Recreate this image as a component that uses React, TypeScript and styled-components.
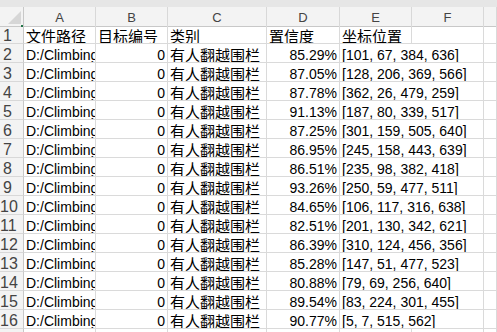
import React from 'react';
import styled, { createGlobalStyle } from 'styled-components';

const GlobalStyle = createGlobalStyle`
  html, body {
    margin: 0;
    padding: 0;
    background: #ffffff;
    overflow: hidden;
  }
  body {
    font-family: "Liberation Sans", "Noto Sans CJK SC", sans-serif;
  }
`;

const COLS = '24px 72px 72px 99px 73px 72px 72px 1fr';

const Sheet = styled.div`
  width: 497px;
  height: 332px;
  overflow: hidden;
  background: #ffffff;
`;

const TopBand = styled.div`
  height: 7px;
  background: #e6e6e6;
`;

const Row = styled.div<{ head?: boolean }>`
  display: grid;
  grid-template-columns: ${COLS};
  height: ${({ head }) => (head ? '18px' : '19px')};
`;

const Corner = styled.div`
  position: relative;
  background: #f3f3f3;
  border-right: 1px solid #c8c8c8;
  border-bottom: 1px solid #c8c8c8;
  box-sizing: border-box;
`;

const Triangle = styled.div`
  position: absolute;
  right: 2px;
  bottom: 2px;
  width: 0;
  height: 0;
  border-left: 13px solid transparent;
  border-bottom: 13px solid #d6d6d6;
`;

const GreenDot = styled.div`
  position: absolute;
  right: 0px;
  bottom: -1px;
  width: 2px;
  height: 2px;
  background: #217346;
`;

const ColHead = styled.div`
  background: #f3f3f3;
  border-right: 1px solid #d8d8d8;
  border-bottom: 1px solid #c8c8c8;
  box-sizing: border-box;
  color: #444444;
  font-size: 13px;
  line-height: 17px;
  padding-top: 2px;
  text-align: center;
`;

const RowHead = styled.div`
  background: #f3f3f3;
  border-right: 1px solid #c8c8c8;
  border-bottom: 1px solid #d8d8d8;
  box-sizing: border-box;
  color: #444444;
  font-family: "Liberation Sans Narrow", "Liberation Sans", sans-serif;
  font-size: 16px;
  line-height: 19px;
  padding-top: 1px;
  padding-right: 8px;
  text-align: center;
  overflow: hidden;
  white-space: nowrap;
`;

const Cell = styled.div<{ align?: 'left' | 'right'; cjk?: boolean; span?: number }>`
  grid-column: ${({ span }) => (span ? `span ${span}` : 'auto')};
  border-right: 1px solid #dadada;
  border-bottom: 1px solid #dadada;
  box-sizing: border-box;
  color: #000000;
  font-size: ${({ cjk }) => (cjk ? '15px' : '14px')};
  line-height: 19px;
  padding: 2px 2px 0 2px;
  text-align: ${({ align }) => align || 'left'};
  white-space: nowrap;
  overflow: hidden;
`;

const letters = ['A', 'B', 'C', 'D', 'E', 'F', ''];

const data: [string, string][] = [
  ['85.29%', '[101, 67, 384, 636]'],
  ['87.05%', '[128, 206, 369, 566]'],
  ['87.78%', '[362, 26, 479, 259]'],
  ['91.13%', '[187, 80, 339, 517]'],
  ['87.25%', '[301, 159, 505, 640]'],
  ['86.95%', '[245, 158, 443, 639]'],
  ['86.51%', '[235, 98, 382, 418]'],
  ['93.26%', '[250, 59, 477, 511]'],
  ['84.65%', '[106, 117, 316, 638]'],
  ['82.51%', '[201, 130, 342, 621]'],
  ['86.39%', '[310, 124, 456, 356]'],
  ['85.28%', '[147, 51, 477, 523]'],
  ['80.88%', '[79, 69, 256, 640]'],
  ['89.54%', '[83, 224, 301, 455]'],
  ['90.77%', '[5, 7, 515, 562]'],
];

export default function App() {
  return (
    <Sheet>
      <GlobalStyle />
      <TopBand />
      <Row head>
        <Corner>
          <Triangle />
          <GreenDot />
        </Corner>
        {letters.map((l, i) => (
          <ColHead key={i}>{l}</ColHead>
        ))}
      </Row>
      <Row>
        <RowHead>1</RowHead>
        <Cell cjk>文件路径</Cell>
        <Cell cjk>目标编号</Cell>
        <Cell cjk>类别</Cell>
        <Cell cjk>置信度</Cell>
        <Cell cjk>坐标位置</Cell>
        <Cell />
        <Cell />
      </Row>
      {data.map(([conf, box], i) => (
        <Row key={i}>
          <RowHead>{i + 2}</RowHead>
          <Cell>D:/Climbing</Cell>
          <Cell align="right">0</Cell>
          <Cell cjk>有人翻越围栏</Cell>
          <Cell align="right">{conf}</Cell>
          <Cell span={2}>{box}</Cell>
          <Cell />
        </Row>
      ))}
      <Row>
        <RowHead>17</RowHead>
        <Cell />
        <Cell />
        <Cell />
        <Cell />
        <Cell />
        <Cell />
        <Cell />
      </Row>
    </Sheet>
  );
}
